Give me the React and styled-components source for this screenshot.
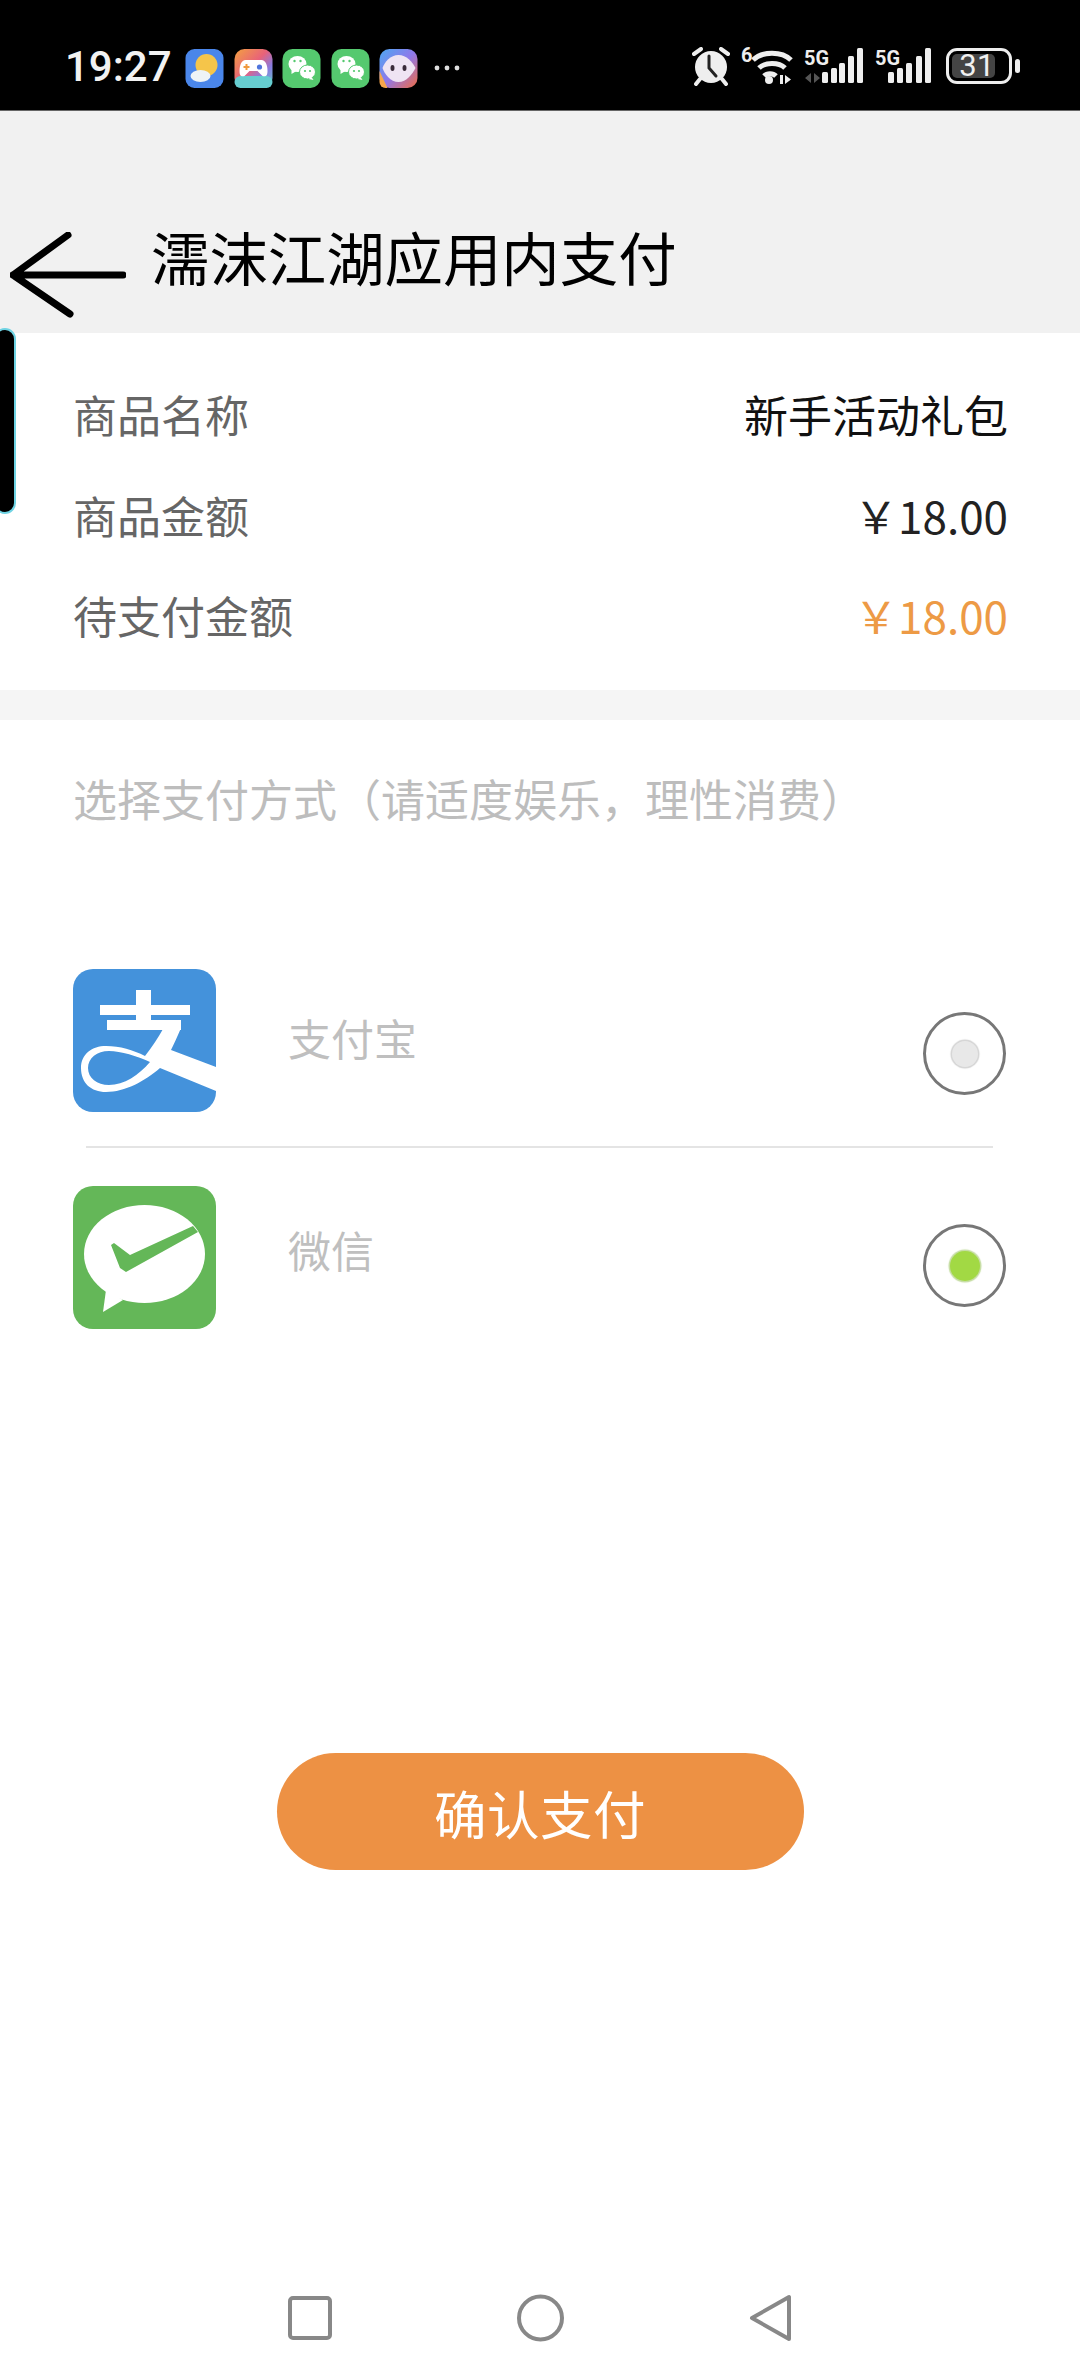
import React from 'react';
import styled, { createGlobalStyle } from 'styled-components';

const GlobalStyle = createGlobalStyle`
  html, body {
    margin: 0;
    padding: 0;
    background: #fff;
  }
  * {
    box-sizing: border-box;
  }
`;

const Page = styled.div`
  position: relative;
  width: 1080px;
  height: 2376px;
  overflow: hidden;
  display: flex;
  flex-direction: column;
  background: #fff;
  font-family: "Noto Sans CJK SC", "Noto Sans", sans-serif;
`;

const StatusBar = styled.div`
  height: 111px;
  flex: none;
  display: flex;
  justify-content: space-between;
  padding: 47px 60px 0 65px;
  background: #000;
  border-bottom: 1px solid #666;
`;

const StatusGroup = styled.div`
  display: flex;
  align-items: flex-start;
`;

const Time = styled.span`
  width: 120px;
  font-family: Roboto, sans-serif;
  font-size: 42px;
  font-weight: 500;
  line-height: 39px;
  color: #f2f2f2;
`;

const AppIcon = styled.svg`
  display: block;
  width: 39px;
  height: 39px;
  margin: 2px ${p => p.$gap ?? 9.5}px 0 0;
`;

const MoreDots = styled.svg`
  display: block;
  width: 26px;
  height: 39px;
  margin: 2px 0 0 16px;
`;

const StatusIcon = styled.svg`
  display: block;
  height: 40px;
  width: ${p => p.$w}px;
  margin-left: ${p => p.$ml ?? 0}px;
`;

const WifiBadge = styled.span`
  width: 10px;
  margin-left: 11px;
  font-family: Roboto, sans-serif;
  font-size: 20px;
  font-weight: 700;
  line-height: 16px;
  color: #eee;
`;

const Battery = styled.div`
  width: 66px;
  height: 36px;
  margin-left: 15px;
  margin-top: 1px;
  border: 3px solid #eee;
  border-radius: 11px;
  padding: 3px;
  display: flex;
`;

const BatteryFill = styled.div`
  width: 43px;
  border-radius: 5px;
  background: #444;
  color: #f0f0f0;
  font-family: Roboto, sans-serif;
  font-size: 31px;
  line-height: 24px;
  text-align: right;
  white-space: nowrap;
  letter-spacing: 0.5px;
`;

const BatteryNub = styled.div`
  width: 5px;
  height: 14px;
  margin: 12px 0 0 3px;
  border-radius: 3px;
  background: #eee;
`;

const Header = styled.header`
  height: 222px;
  flex: none;
  display: flex;
  align-items: flex-end;
  padding-left: 10px;
  background: #f1f1f1;
`;

const BackArrow = styled.svg`
  display: block;
  flex: none;
  width: 116px;
  height: 86px;
  margin-bottom: 15px;
`;

const Title = styled.h1`
  margin: 0 0 42px 25px;
  font-size: 58.4px;
  line-height: 70px;
  font-weight: 400;
  color: #000;
  white-space: nowrap;
`;

const SideHandle = styled.div`
  position: absolute;
  left: -6px;
  top: 328px;
  width: 22px;
  height: 186px;
  background: #000;
  border: 2px solid #6fd3e3;
  border-radius: 11px;
`;

const InfoCard = styled.section`
  height: 357px;
  flex: none;
  padding: 31px 72px 0 73px;
`;

const InfoRow = styled.div`
  height: 100.5px;
  display: flex;
  align-items: center;
  justify-content: space-between;
  font-size: 44px;
`;

const InfoLabel = styled.span`
  color: #666;
`;

const InfoValue = styled.span`
  color: ${p => p.$color};
`;

const Band = styled.div`
  height: 30px;
  flex: none;
  background: #f5f5f5;
`;

const SectionLabel = styled.div`
  margin: 48px 0 0 73px;
  font-size: 44px;
  line-height: 60px;
  color: #bdbdbd;
  white-space: nowrap;
`;

const PayList = styled.div`
  margin-top: 141px;
`;

const PayRow = styled.div`
  height: 143px;
  display: flex;
  align-items: flex-start;
  padding: 0 74px 0 73px;
`;

const LogoBox = styled.div`
  width: 143px;
  height: 143px;
  flex: none;
  border-radius: 20px;
  overflow: hidden;
  background: ${p => p.$bg};
`;

const LogoSvg = styled.svg`
  display: block;
  width: 143px;
  height: 143px;
`;

const PayName = styled.span`
  flex: 1;
  margin: ${p => p.$top}px 0 0 72px;
  font-size: 43px;
  line-height: 60px;
  color: #bfbfbf;
`;

const Radio = styled.div`
  width: 83px;
  height: 83px;
  flex: none;
  margin-top: ${p => p.$top}px;
  border: 3.5px solid #777;
  border-radius: 50%;
  display: flex;
  align-items: center;
  justify-content: center;
`;

const RadioDot = styled.div`
  width: ${p => (p.$on ? 30 : 26)}px;
  height: ${p => (p.$on ? 30 : 26)}px;
  border-radius: 50%;
  background: ${p => (p.$on ? '#a2d944' : '#e8e8e8')};
  box-shadow: 0 0 1px 1.5px ${p => (p.$on ? '#c4dca0' : '#d4d4d4')};
`;

const Divider = styled.div`
  height: 2px;
  margin: 34px 87px 38px 86px;
  background: #e4e4e4;
`;

const PayButton = styled.button`
  display: block;
  width: 527px;
  height: 117px;
  margin: 424px auto 0;
  padding: 0;
  border: none;
  border-radius: 59px;
  background: #ed9144;
  color: #fff;
  font-family: inherit;
  font-size: 52.5px;
  letter-spacing: 0.5px;
`;

const NavBar = styled.nav`
  margin-top: auto;
  display: flex;
  align-items: center;
  gap: 185px;
  padding: 0 0 34px 288px;
`;

const NavIcon = styled.svg`
  display: block;
  width: ${p => p.$w}px;
  height: 48px;
`;

const WeChatGlyph = ({ gap }) => (
  <AppIcon viewBox="0 0 38 39" $gap={gap}>
    <rect width="38" height="39" rx="10" fill="#55c96f" />
    <ellipse cx="15" cy="15" rx="9" ry="8" fill="#fff" />
    <path d="M9 20l0 5 5-3z" fill="#fff" />
    <ellipse cx="25" cy="23" rx="8" ry="7" fill="#fff" stroke="#55c96f" strokeWidth="1" />
    <path d="M29 28l2 3-5-1z" fill="#fff" />
    <circle cx="12" cy="12" r="1.2" fill="#55c96f" />
    <circle cx="18" cy="12" r="1.2" fill="#55c96f" />
    <circle cx="22.5" cy="22" r="1.1" fill="#55c96f" />
    <circle cx="27.5" cy="22" r="1.1" fill="#55c96f" />
  </AppIcon>
);

const barTops = [25, 21, 16, 9, 1];

const SignalBars = ({ w, ml, xs, arrows }) => (
  <StatusIcon viewBox={`0 0 ${w} 40`} $w={w} $ml={ml}>
    <text x="0" y="18" fontFamily="Roboto, sans-serif" fontWeight="700" fontSize="21" fill="#eee" textLength="25" lengthAdjust="spacingAndGlyphs">5G</text>
    {arrows && <path d="M7 26l-6 5 6 5zM10 36l6-5-6-5z" fill="#555" />}
    <g fill="#eee">
      {xs.map((x, i) => (
        <rect key={x} x={x} y={barTops[i]} width="6" height={36 - barTops[i]} rx="1.5" />
      ))}
    </g>
  </StatusIcon>
);

export default function App() {
  return (
    <Page>
      <GlobalStyle />
      <StatusBar>
        <StatusGroup>
          <Time>19:27</Time>
          <AppIcon viewBox="0 0 38 39">
            <rect width="38" height="39" rx="9" fill="#4a86ea" />
            <circle cx="21" cy="16" r="11" fill="#f5c54a" />
            <ellipse cx="15" cy="27" rx="10" ry="6" fill="#eef3f6" />
          </AppIcon>
          <AppIcon viewBox="0 0 38 39">
            <defs>
              <linearGradient id="gameBg" x1="0" y1="0" x2="1" y2="1">
                <stop offset="0" stopColor="#f4a13f" />
                <stop offset="0.45" stopColor="#e8627a" />
                <stop offset="0.7" stopColor="#8a7be0" />
                <stop offset="1" stopColor="#62ccc8" />
              </linearGradient>
            </defs>
            <rect width="38" height="39" rx="10" fill="url(#gameBg)" />
            <rect y="27" width="38" height="12" rx="6" fill="#66cdd0" />
            <path d="M11 11h16c4 0 6 5 6 11 0 5-2 6-5 5l-5-5h-8l-5 5c-3 1-5 0-5-5 0-6 2-11 6-11z" fill="#fff" />
            <path d="M11 15h2v2h2v2h-2v2h-2v-2H9v-2h2z" fill="#f09a3e" />
            <circle cx="25" cy="18" r="2.6" fill="#4f75dd" />
          </AppIcon>
          <WeChatGlyph />
          <WeChatGlyph />
          <AppIcon viewBox="0 0 38 39" $gap={0}>
            <defs>
              <linearGradient id="faceBg" x1="0" y1="0" x2="1" y2="1">
                <stop offset="0" stopColor="#4da8f2" />
                <stop offset="0.5" stopColor="#8f78ea" />
                <stop offset="1" stopColor="#ef6b45" />
              </linearGradient>
            </defs>
            <rect width="38" height="39" rx="10" fill="url(#faceBg)" />
            <path d="M0 22l8 17h-2a6 6 0 0 1-6-6z" fill="#f6a64c" />
            <path d="M19 6c8 0 14 7 17 13-3 6-9 14-17 14S5 25 3 19C5 13 11 6 19 6z" fill="#efe4f3" />
            <ellipse cx="13" cy="19" rx="2" ry="3" fill="#3a2b3a" />
            <ellipse cx="25" cy="19" rx="2" ry="3" fill="#3a2b3a" />
          </AppIcon>
          <MoreDots viewBox="0 0 26 39">
            <g fill="#ddd">
              <circle cx="3" cy="19" r="2.4" />
              <circle cx="13" cy="19" r="2.4" />
              <circle cx="23" cy="19" r="2.4" />
            </g>
          </MoreDots>
        </StatusGroup>
        <StatusGroup>
          <StatusIcon viewBox="0 0 38 40" $w={38}>
            <g stroke="#eee" strokeWidth="4" strokeLinecap="round" fill="none">
              <path d="M2 7l7-5M36 7l-7-5M8 32l-4 5M30 32l4 5" />
            </g>
            <circle cx="19" cy="20" r="16" fill="#eee" />
            <path d="M17 9v12l7 8" stroke="#222" strokeWidth="3" fill="none" strokeLinecap="round" />
          </StatusIcon>
          <WifiBadge>6</WifiBadge>
          <StatusIcon viewBox="0 0 42 40" $w={42}>
            <g stroke="#eee" strokeWidth="5" fill="none">
              <path d="M2 13c9-9 29-9 38 0" />
              <path d="M8 21c6-6 20-6 26 0" />
              <path d="M13 29c3-3 9-3 12 0" />
            </g>
            <circle cx="18" cy="33" r="4" fill="#eee" />
            <path d="M29 28h3v9h-3zM34 28l6 4.500-6 4.500z" fill="#eee" />
          </StatusIcon>
          <SignalBars w={60} ml={11} xs={[18, 27, 35, 44, 53]} arrows />
          <SignalBars w={56} ml={11} xs={[13, 22, 31, 41, 50]} />
          <Battery>
            <BatteryFill>31</BatteryFill>
          </Battery>
          <BatteryNub />
        </StatusGroup>
      </StatusBar>

      <Header>
        <BackArrow viewBox="0 0 116 86">
          <path d="M113 43H3M58 3L3 43l57 39" stroke="#000" strokeWidth="7" strokeLinecap="round" strokeLinejoin="round" fill="none" />
        </BackArrow>
        <Title>濡沫江湖应用内支付</Title>
      </Header>
      <SideHandle />

      <InfoCard>
        <InfoRow>
          <InfoLabel>商品名称</InfoLabel>
          <InfoValue $color="#111">新手活动礼包</InfoValue>
        </InfoRow>
        <InfoRow>
          <InfoLabel>商品金额</InfoLabel>
          <InfoValue $color="#222">￥18.00</InfoValue>
        </InfoRow>
        <InfoRow>
          <InfoLabel>待支付金额</InfoLabel>
          <InfoValue $color="#ed9a45">￥18.00</InfoValue>
        </InfoRow>
      </InfoCard>
      <Band />

      <SectionLabel>选择支付方式（请适度娱乐，理性消费）</SectionLabel>

      <PayList>
        <PayRow>
          <LogoBox $bg="#4492db">
            <LogoSvg viewBox="0 0 143 143">
              <g fill="#fff">
                <rect x="27" y="36" width="90" height="10" />
                <rect x="63" y="21" width="15" height="40" />
                <rect x="34" y="51" width="74" height="10" />
                <path
                  fillRule="evenodd"
                  d="M90 60L108 59C104 68 101 75 98 81L143 98V122L87 99C72 112 52 123 33 123 18 123 8 114 8 99 8 85 19 77 33 77 47 77 60 81 72 87 79 78 85 69 90 60ZM77 93C64 87 48 82 36 82 24 82 15 89 15 99 15 109 24 116 36 116 51 116 66 106 77 93Z"
                />
              </g>
            </LogoSvg>
          </LogoBox>
          <PayName $top={38}>支付宝</PayName>
          <Radio $top={43}>
            <RadioDot />
          </Radio>
        </PayRow>
        <Divider />
        <PayRow>
          <LogoBox $bg="#64b758">
            <LogoSvg viewBox="0 0 143 143">
              <ellipse cx="71.5" cy="68" rx="60.5" ry="49" fill="#fff" />
              <path d="M33 104L30 126 50 114z" fill="#fff" />
              <path d="M120 40L125 46 53 86 47 82 38 59 41 57 57 69z" fill="#64b758" />
            </LogoSvg>
          </LogoBox>
          <PayName $top={33}>微信</PayName>
          <Radio $top={38}>
            <RadioDot $on />
          </Radio>
        </PayRow>
      </PayList>

      <PayButton>确认支付</PayButton>

      <NavBar>
        <NavIcon viewBox="0 0 44 48" $w={44}>
          <rect x="2" y="4" width="40" height="40" rx="3" fill="none" stroke="#888" strokeWidth="4" />
        </NavIcon>
        <NavIcon viewBox="0 0 47 48" $w={47}>
          <circle cx="23.5" cy="24" r="21.5" fill="none" stroke="#888" strokeWidth="4" />
        </NavIcon>
        <NavIcon viewBox="0 0 43 48" $w={43}>
          <path d="M40 3V45L3 24z" fill="none" stroke="#888" strokeWidth="4" strokeLinejoin="round" />
        </NavIcon>
      </NavBar>
    </Page>
  );
}
